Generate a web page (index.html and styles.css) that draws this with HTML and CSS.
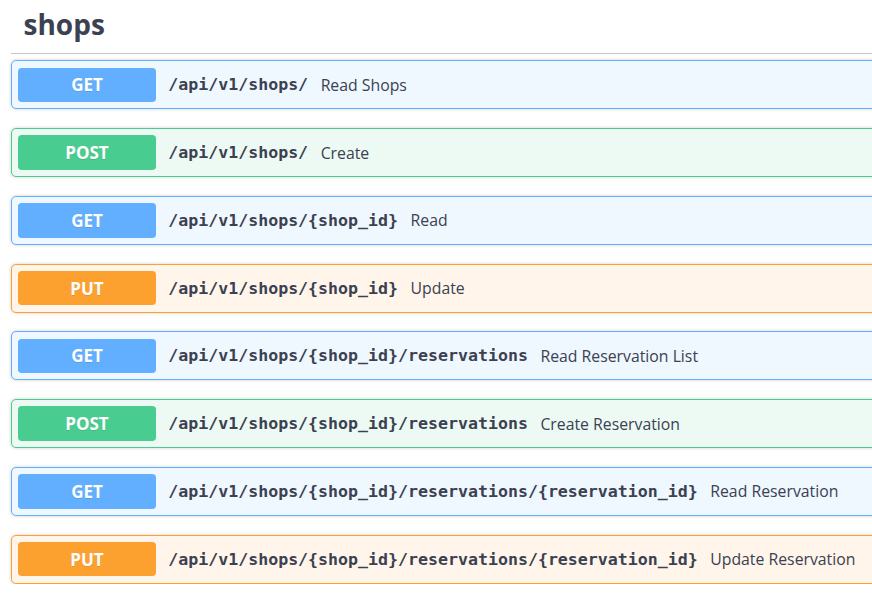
FILE: index.html
```html
<!DOCTYPE html>
<html>
<head>
<meta charset="utf-8">
<link rel="stylesheet" href="styles.css">
</head>
<body>
<div class="tag-section">
  <h4 class="tag">shops</h4>
  <div class="ops">
    <div class="opblock get"><span class="method">GET</span><span class="path">/api/v1/shops/</span><span class="desc">Read Shops</span></div>
    <div class="opblock post"><span class="method">POST</span><span class="path">/api/v1/shops/</span><span class="desc">Create</span></div>
    <div class="opblock get"><span class="method">GET</span><span class="path">/api/v1/shops/{shop_id}</span><span class="desc">Read</span></div>
    <div class="opblock put"><span class="method">PUT</span><span class="path">/api/v1/shops/{shop_id}</span><span class="desc">Update</span></div>
    <div class="opblock get"><span class="method">GET</span><span class="path">/api/v1/shops/{shop_id}/reservations</span><span class="desc">Read Reservation List</span></div>
    <div class="opblock post"><span class="method">POST</span><span class="path">/api/v1/shops/{shop_id}/reservations</span><span class="desc">Create Reservation</span></div>
    <div class="opblock get"><span class="method">GET</span><span class="path">/api/v1/shops/{shop_id}/reservations/{reservation_id}</span><span class="desc">Read Reservation</span></div>
    <div class="opblock put"><span class="method">PUT</span><span class="path">/api/v1/shops/{shop_id}/reservations/{reservation_id}</span><span class="desc">Update Reservation</span></div>
  </div>
</div>
</body>
</html>
```
FILE: styles.css
```css
html, body {
  margin: 0;
  padding: 0;
  background: #ffffff;
  overflow: hidden;
}
body {
  font-family: "Open Sans", "Noto Sans", sans-serif;
  color: #3b4151;
}
.tag-section {
  margin-left: 11px;
  width: 900px;
}
.tag {
  margin: 0 0 6.25px;
  padding: 6px 25px 11px 12.5px;
  font-size: 28px;
  line-height: 36px;
  font-weight: 700;
  color: #3b4151;
  border-bottom: 1.25px solid rgba(59, 65, 81, 0.3);
}
.ops {
  display: flex;
  flex-direction: column;
  gap: 18.75px;
}
.opblock {
  display: flex;
  align-items: center;
  height: 47px;
  padding: 0 6.25px;
  border: 1.25px solid;
  border-radius: 5px;
  box-shadow: 0 0 3.75px rgba(0, 0, 0, 0.19);
}
.opblock.get { background: #eff7ff; border-color: #61affe; }
.opblock.post { background: #edfaf4; border-color: #49cc90; }
.opblock.put { background: #fff5ea; border-color: #fca130; }
.method {
  box-sizing: border-box;
  width: 137.5px;
  height: 34.5px;
  border-radius: 3.75px;
  display: flex;
  align-items: center;
  justify-content: center;
  color: #ffffff;
  font-weight: 700;
  font-size: 17px;
  text-shadow: 0 1px 0 rgba(0, 0, 0, 0.1);
}
.get .method { background: #61affe; }
.post .method { background: #49cc90; }
.put .method { background: #fca130; }
.path {
  padding: 0 12.5px;
  font-family: "DejaVu Sans Mono", monospace;
  font-weight: 700;
  font-size: 16.6px;
  color: #3b4151;
}
.desc {
  font-size: 15.8px;
  color: #3b4151;
}
```
